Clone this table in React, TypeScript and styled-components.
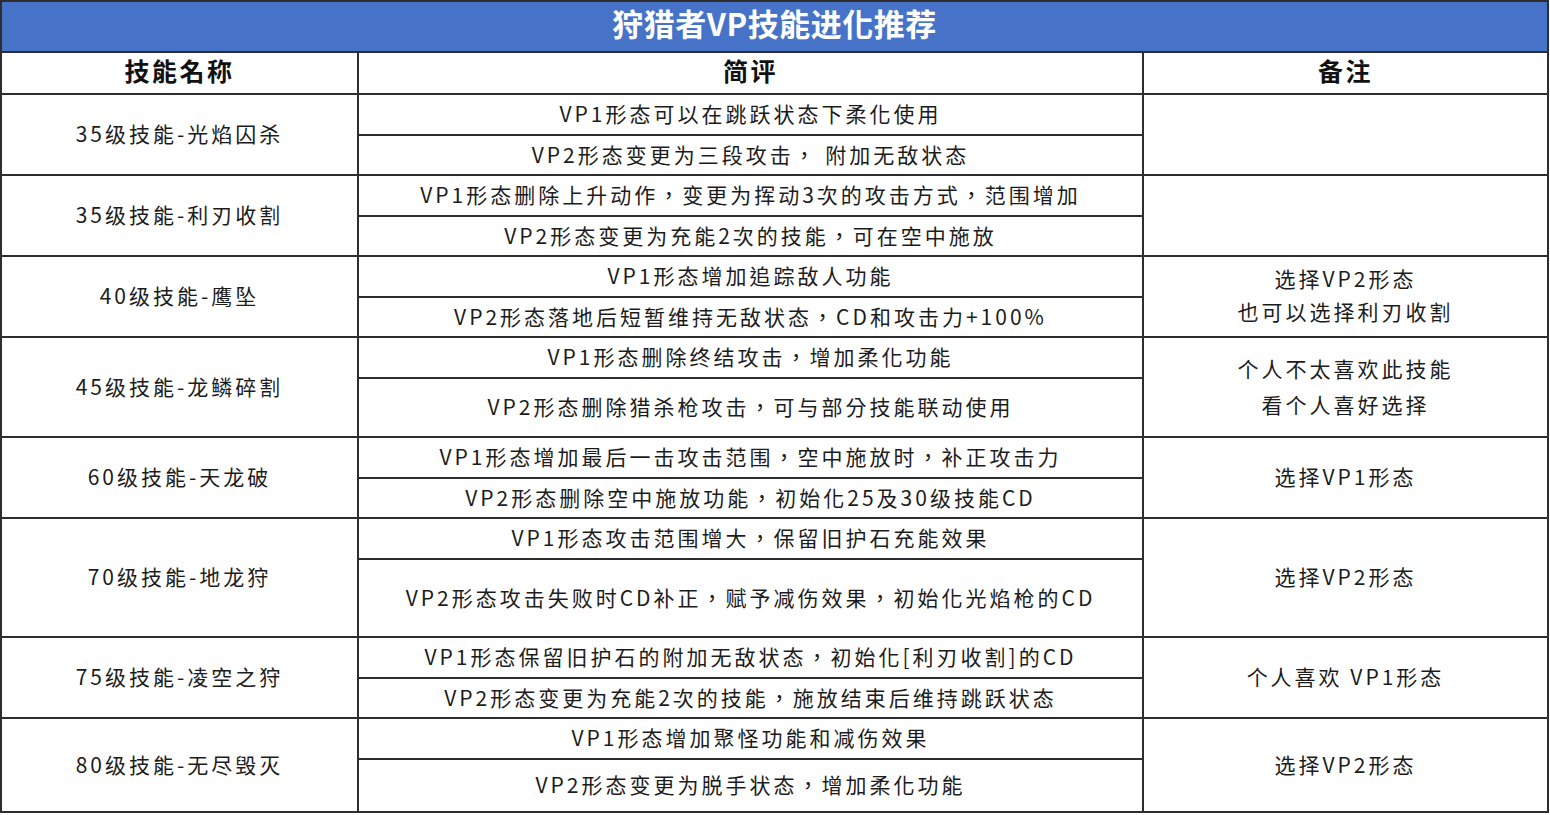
import styled, { createGlobalStyle } from 'styled-components'

const GlobalStyle = createGlobalStyle`
  html, body {
    margin: 0;
    padding: 0;
    background: #ffffff;
  }
  body {
    font-family: "Noto Sans CJK TC", "Noto Sans CJK SC", "Noto Sans", sans-serif;
    color: #1c1c1c;
  }
`

const LINE = '2px solid #2e2e2e'

const Table = styled.div`
  width: 1549px;
  border-left: ${LINE};
  border-right: ${LINE};
  box-sizing: border-box;
`

const TitleBar = styled.div`
  height: 53px;
  box-sizing: border-box;
  border-top: ${LINE};
  border-bottom: ${LINE};
  background: #4673c8;
  color: #ffffff;
  font-size: 31px;
  font-weight: 700;
  letter-spacing: 0.5px;
  display: flex;
  align-items: center;
  justify-content: center;
  padding-bottom: 8px;
`

const Row = styled.div<{ $h: number }>`
  display: grid;
  grid-template-columns: 357px 785px 1fr;
  height: ${({ $h }) => $h}px;
  box-sizing: border-box;
  border-bottom: ${LINE};
`

const Cell = styled.div<{ $divider?: boolean; $lh?: number }>`
  display: flex;
  flex-direction: column;
  align-items: center;
  justify-content: center;
  text-align: center;
  box-sizing: border-box;
  border-right: ${({ $divider }) => ($divider ? LINE : 'none')};
  font-size: 21px;
  letter-spacing: 3px;
  line-height: ${({ $lh }) => $lh ?? 28}px;
  padding-bottom: 3px;
  min-width: 0;
`

const HeadCell = styled(Cell)`
  font-size: 25px;
  font-weight: 700;
  color: #111111;
  letter-spacing: 2.5px;
  padding-bottom: 6px;
`

const Stack = styled.div`
  display: flex;
  flex-direction: column;
  border-right: ${LINE};
`

const SubRow = styled.div<{ $h?: number }>`
  display: flex;
  align-items: center;
  justify-content: center;
  box-sizing: border-box;
  font-size: 21px;
  letter-spacing: 3px;
  white-space: nowrap;
  padding-bottom: 3px;
  ${({ $h }) => ($h ? `height: ${$h}px; border-bottom: ${LINE};` : 'flex: 1;')}
`

type Group = {
  name: string
  h: number
  comments: [string, string]
  note: string[]
  lh?: number
}

const groups: Group[] = [
  {
    name: '35级技能-光焰囚杀',
    h: 81,
    comments: ['VP1形态可以在跳跃状态下柔化使用', 'VP2形态变更为三段攻击， 附加无敌状态'],
    note: [],
  },
  {
    name: '35级技能-利刃收割',
    h: 81,
    comments: ['VP1形态删除上升动作，变更为挥动3次的攻击方式，范围增加', 'VP2形态变更为充能2次的技能，可在空中施放'],
    note: [],
  },
  {
    name: '40级技能-鹰坠',
    h: 81,
    comments: ['VP1形态增加追踪敌人功能', 'VP2形态落地后短暂维持无敌状态，CD和攻击力+100%'],
    note: ['选择VP2形态', '也可以选择利刃收割'],
    lh: 33,
  },
  {
    name: '45级技能-龙鳞碎割',
    h: 100,
    comments: ['VP1形态删除终结攻击，增加柔化功能', 'VP2形态删除猎杀枪攻击，可与部分技能联动使用'],
    note: ['个人不太喜欢此技能', '看个人喜好选择'],
    lh: 36,
  },
  {
    name: '60级技能-天龙破',
    h: 81,
    comments: ['VP1形态增加最后一击攻击范围，空中施放时，补正攻击力', 'VP2形态删除空中施放功能，初始化25及30级技能CD'],
    note: ['选择VP1形态'],
  },
  {
    name: '70级技能-地龙狩',
    h: 119,
    comments: ['VP1形态攻击范围增大，保留旧护石充能效果', 'VP2形态攻击失败时CD补正，赋予减伤效果，初始化光焰枪的CD'],
    note: ['选择VP2形态'],
  },
  {
    name: '75级技能-凌空之狩',
    h: 81,
    comments: ['VP1形态保留旧护石的附加无敌状态，初始化[利刃收割]的CD', 'VP2形态变更为充能2次的技能，施放结束后维持跳跃状态'],
    note: ['个人喜欢 VP1形态'],
  },
  {
    name: '80级技能-无尽毁灭',
    h: 94,
    comments: ['VP1形态增加聚怪功能和减伤效果', 'VP2形态变更为脱手状态，增加柔化功能'],
    note: ['选择VP2形态'],
  },
]

export default function App() {
  return (
    <>
      <GlobalStyle />
      <Table>
        <TitleBar>狩猎者VP技能进化推荐</TitleBar>
        <Row $h={42}>
          <HeadCell $divider>技能名称</HeadCell>
          <HeadCell $divider>简评</HeadCell>
          <HeadCell>备注</HeadCell>
        </Row>
        {groups.map((g) => (
          <Row key={g.name} $h={g.h}>
            <Cell $divider>{g.name}</Cell>
            <Stack>
              <SubRow $h={41}>{g.comments[0]}</SubRow>
              <SubRow>{g.comments[1]}</SubRow>
            </Stack>
            <Cell $lh={g.lh}>
              {g.note.map((n) => (
                <div key={n}>{n}</div>
              ))}
            </Cell>
          </Row>
        ))}
      </Table>
    </>
  )
}
